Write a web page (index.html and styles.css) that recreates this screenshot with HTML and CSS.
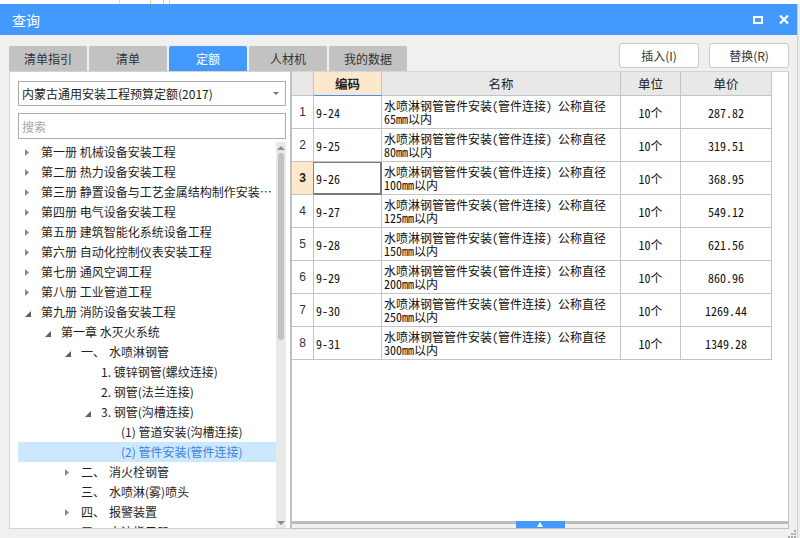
FILE: index.html
```html
<!DOCTYPE html>
<html lang="zh-CN">
<head>
<meta charset="utf-8">
<title>查询</title>
<link rel="stylesheet" href="styles.css">
</head>
<body>
<div class="underlay"><span class="ul-a"></span><span class="ul-b"></span><span class="ul-c"></span><span class="ul-d"></span></div>
<div class="shell">
  <div class="window">
    <div class="titlebar">
      <span class="title">查询</span>
      <div class="ctrls">
        <svg class="ic-max" width="10" height="8" viewBox="0 0 10 8"><rect x="1" y="1" width="8" height="6" fill="none" stroke="#fff" stroke-width="2"/></svg>
        <svg class="ic-close" width="10" height="9" viewBox="0 0 10 9"><path d="M1 0.5 L9 8.5 M9 0.5 L1 8.5" stroke="#fff" stroke-width="2.2" fill="none"/></svg>
      </div>
    </div>
    <div class="content">
      <div class="toprow">
        <div class="tabs">
          <div class="tab">清单指引</div>
          <div class="tab">清单</div>
          <div class="tab active">定额</div>
          <div class="tab">人材机</div>
          <div class="tab">我的数据</div>
        </div>
        <div class="btns">
          <button class="btn">插入(I)</button>
          <button class="btn">替换(R)</button>
        </div>
      </div>
      <div class="panels">
        <div class="left">
          <div class="select"><span>内蒙古通用安装工程预算定额(2017)</span><svg class="caret" width="6" height="3" viewBox="0 0 6 3"><polygon points="0,0 6,0 3,3" fill="#777"/></svg></div>
          <div class="search">搜索</div>
          <div class="tree">
            <div class="tree-list">
              <div class="node l0"><span class="tg"><svg width="4" height="7" viewBox="0 0 4 7"><polygon points="0,0 4,3.5 0,7" fill="#8a8a8a"/></svg></span><span class="label">第一册 机械设备安装工程</span></div>
              <div class="node l0"><span class="tg"><svg width="4" height="7" viewBox="0 0 4 7"><polygon points="0,0 4,3.5 0,7" fill="#8a8a8a"/></svg></span><span class="label">第二册 热力设备安装工程</span></div>
              <div class="node l0"><span class="tg"><svg width="4" height="7" viewBox="0 0 4 7"><polygon points="0,0 4,3.5 0,7" fill="#8a8a8a"/></svg></span><span class="label">第三册 静置设备与工艺金属结构制作安装工程</span></div>
              <div class="node l0"><span class="tg"><svg width="4" height="7" viewBox="0 0 4 7"><polygon points="0,0 4,3.5 0,7" fill="#8a8a8a"/></svg></span><span class="label">第四册 电气设备安装工程</span></div>
              <div class="node l0"><span class="tg"><svg width="4" height="7" viewBox="0 0 4 7"><polygon points="0,0 4,3.5 0,7" fill="#8a8a8a"/></svg></span><span class="label">第五册 建筑智能化系统设备工程</span></div>
              <div class="node l0"><span class="tg"><svg width="4" height="7" viewBox="0 0 4 7"><polygon points="0,0 4,3.5 0,7" fill="#8a8a8a"/></svg></span><span class="label">第六册 自动化控制仪表安装工程</span></div>
              <div class="node l0"><span class="tg"><svg width="4" height="7" viewBox="0 0 4 7"><polygon points="0,0 4,3.5 0,7" fill="#8a8a8a"/></svg></span><span class="label">第七册 通风空调工程</span></div>
              <div class="node l0"><span class="tg"><svg width="4" height="7" viewBox="0 0 4 7"><polygon points="0,0 4,3.5 0,7" fill="#8a8a8a"/></svg></span><span class="label">第八册 工业管道工程</span></div>
              <div class="node l0"><span class="tg"><svg class="exp" width="6" height="6" viewBox="0 0 6 6"><polygon points="6,0 6,6 0,6" fill="#5e5e5e"/></svg></span><span class="label">第九册 消防设备安装工程</span></div>
              <div class="node l1"><span class="tg"><svg class="exp" width="6" height="6" viewBox="0 0 6 6"><polygon points="6,0 6,6 0,6" fill="#5e5e5e"/></svg></span><span class="label">第一章 水灭火系统</span></div>
              <div class="node l2"><span class="tg"><svg class="exp" width="6" height="6" viewBox="0 0 6 6"><polygon points="6,0 6,6 0,6" fill="#5e5e5e"/></svg></span><span class="label"><span class="ord">一、</span>水喷淋钢管</span></div>
              <div class="node l3"><span class="tg"></span><span class="label">1. 镀锌钢管(螺纹连接)</span></div>
              <div class="node l3"><span class="tg"></span><span class="label">2. 钢管(法兰连接)</span></div>
              <div class="node l3"><span class="tg"><svg class="exp" width="6" height="6" viewBox="0 0 6 6"><polygon points="6,0 6,6 0,6" fill="#5e5e5e"/></svg></span><span class="label">3. 钢管(沟槽连接)</span></div>
              <div class="node l4"><span class="tg"></span><span class="label">(1) 管道安装(沟槽连接)</span></div>
              <div class="node l4 selected"><span class="tg"></span><span class="label">(2) 管件安装(管件连接)</span></div>
              <div class="node l2"><span class="tg"><svg width="4" height="7" viewBox="0 0 4 7"><polygon points="0,0 4,3.5 0,7" fill="#8a8a8a"/></svg></span><span class="label"><span class="ord">二、</span>消火栓钢管</span></div>
              <div class="node l2"><span class="tg"></span><span class="label"><span class="ord">三、</span>水喷淋(雾)喷头</span></div>
              <div class="node l2"><span class="tg"><svg width="4" height="7" viewBox="0 0 4 7"><polygon points="0,0 4,3.5 0,7" fill="#8a8a8a"/></svg></span><span class="label"><span class="ord">四、</span>报警装置</span></div>
              <div class="node l2"><span class="tg"></span><span class="label"><span class="ord">五、</span>水流指示器</span></div>
            </div>
            <div class="vscroll">
              <svg class="arr-up" width="8" height="4" viewBox="0 0 8 4"><polygon points="0,4 4,0 8,4" fill="#8c8c8c"/></svg>
              <span class="thumb"></span>
              <span class="vspace"></span>
              <svg class="arr-down" width="8" height="4" viewBox="0 0 8 4"><polygon points="0,0 8,0 4,4" fill="#8c8c8c"/></svg>
            </div>
          </div>
        </div>
        <div class="right">
          <div class="table-area">
            <div class="grid">
              <div class="h"></div>
              <div class="h code-h">编码</div>
              <div class="h">名称</div>
              <div class="h">单位</div>
              <div class="h">单价</div>

              <div class="c num">1</div><div class="c code">9-24</div><div class="c name">水喷淋钢管管件安装(管件连接) 公称直径<br>65mm以内</div><div class="c unit">10个</div><div class="c price">287.82</div>
              <div class="c num">2</div><div class="c code">9-25</div><div class="c name">水喷淋钢管管件安装(管件连接) 公称直径<br>80mm以内</div><div class="c unit">10个</div><div class="c price">319.51</div>
              <div class="c num cur">3</div><div class="c code sel">9-26</div><div class="c name">水喷淋钢管管件安装(管件连接) 公称直径<br>100mm以内</div><div class="c unit">10个</div><div class="c price">368.95</div>
              <div class="c num">4</div><div class="c code">9-27</div><div class="c name">水喷淋钢管管件安装(管件连接) 公称直径<br>125mm以内</div><div class="c unit">10个</div><div class="c price">549.12</div>
              <div class="c num">5</div><div class="c code">9-28</div><div class="c name">水喷淋钢管管件安装(管件连接) 公称直径<br>150mm以内</div><div class="c unit">10个</div><div class="c price">621.56</div>
              <div class="c num">6</div><div class="c code">9-29</div><div class="c name">水喷淋钢管管件安装(管件连接) 公称直径<br>200mm以内</div><div class="c unit">10个</div><div class="c price">860.96</div>
              <div class="c num">7</div><div class="c code">9-30</div><div class="c name">水喷淋钢管管件安装(管件连接) 公称直径<br>250mm以内</div><div class="c unit">10个</div><div class="c price">1269.44</div>
              <div class="c num">8</div><div class="c code">9-31</div><div class="c name">水喷淋钢管管件安装(管件连接) 公称直径<br>300mm以内</div><div class="c unit">10个</div><div class="c price">1349.28</div>
            </div>
          </div>
          <div class="splitter"><div class="handle"><svg width="6" height="5" viewBox="0 0 6 5"><polygon points="0,5 3,0 6,5" fill="#fff"/></svg></div></div>
        </div>
      </div>
    </div>
    <svg class="grip" width="9" height="8" viewBox="0 0 9 8">
      <rect x="7" y="0" width="2" height="2" fill="#a8a8a8"/>
      <rect x="4" y="3" width="2" height="2" fill="#a8a8a8"/>
      <rect x="7" y="3" width="2" height="2" fill="#a8a8a8"/>
      <rect x="1" y="6" width="2" height="2" fill="#a8a8a8"/>
      <rect x="4" y="6" width="2" height="2" fill="#a8a8a8"/>
      <rect x="7" y="6" width="2" height="2" fill="#a8a8a8"/>
    </svg>
  </div>
  <div class="outside"></div>
</div>
</body>
</html>
```

FILE: styles.css
```css
* { box-sizing: border-box; }
html, body { margin: 0; padding: 0; }
body {
  width: 800px;
  height: 538px;
  overflow: hidden;
  background: #fff;
  font-family: "Noto Sans CJK SC", "Microsoft YaHei", sans-serif;
  font-size: 12px;
  color: #222;
  display: flex;
  flex-direction: column;
}
svg { display: block; }

/* underlying application strip */
.underlay { height: 4px; flex: none; background: #fff; display: flex; }
.ul-a { width: 120px; border-right: 1px solid #d8d8d8; }
.ul-b { width: 30px; }
.ul-c { width: 14px; border-left: 1px solid #f3c98f; border-right: 1px solid #f3c98f; }
.ul-d { width: 6px; border-right: 1px solid #cfcfcf; }

.shell { flex: 1; display: flex; min-height: 0; }
.window {
  width: 798px;
  border-right: 1px solid #cfcfcf;
  background: #f0f0f0;
  display: flex;
  flex-direction: column;
  position: relative;
}
.outside { flex: 1; background: #ececec; }

.titlebar {
  height: 31px;
  flex: none;
  background: #4499ff;
  color: #fff;
  display: flex;
  align-items: center;
  justify-content: space-between;
  padding: 0 8px 0 12px;
}
.title { font-size: 14px; }
.ctrls { display: flex; align-items: center; gap: 16px; }

.content {
  flex: 1;
  min-height: 0;
  display: flex;
  flex-direction: column;
  padding: 0 8px 9px 9px;
}
.toprow { height: 36px; flex: none; display: flex; justify-content: space-between; }
.tabs { align-self: flex-end; display: flex; gap: 2px; }
.tab {
  width: 78px;
  height: 25px;
  background: #c2c2c2;
  color: #333;
  display: flex;
  align-items: center;
  justify-content: center;
  border-radius: 2px 2px 0 0;
}
.tab.active { background: #4499ff; color: #fff; }
.btns { display: flex; gap: 10px; padding-top: 8px; }
.btn {
  width: 80px;
  height: 25px;
  padding: 0;
  background: #fff;
  border: 1px solid #c9c9c9;
  border-radius: 3px;
  font: inherit;
  color: #333;
  display: flex;
  align-items: center;
  justify-content: center;
}

.panels { flex: 1; min-height: 0; display: flex; }

/* left panel */
.left {
  width: 282px;
  flex: none;
  background: #fff;
  border: 1px solid #d3d3d3;
  border-right-color: #bdbdbd;
  display: flex;
  flex-direction: column;
  padding: 9px 4px 0 8px;
}
.select {
  height: 25px;
  flex: none;
  border: 1px solid #ababab;
  display: flex;
  align-items: center;
  justify-content: space-between;
  padding: 0 6px 0 3px;
  color: #222;
}
.search {
  margin-top: 7px;
  height: 26px;
  flex: none;
  border: 1px solid #ababab;
  padding-left: 3px;
  display: flex;
  align-items: center;
  color: #a6a6a6;
}
.tree { margin-top: 3px; flex: 1; min-height: 0; display: flex; overflow: hidden; }
.tree-list { flex: 1; min-width: 0; overflow: hidden; }
.node {
  height: 20px;
  line-height: 20px;
  display: flex;
  align-items: center;
  white-space: nowrap;
  color: #1e1e1e;
}
.l0 { padding-left: 7px; }
.l1 { padding-left: 27px; }
.l2 { padding-left: 47px; }
.l3 { padding-left: 67px; }
.l4 { padding-left: 87px; }
.node.selected { background: #cce8ff; color: #3f80e0; }
.tg { width: 16px; height: 20px; flex: none; display: flex; align-items: center; }
.tg .exp { margin-top: 3px; }
.label { flex: 1; min-width: 0; overflow: hidden; text-overflow: ellipsis; padding-right: 2px; }
.ord { margin-right: 4px; }

.vscroll {
  width: 10px;
  flex: none;
  background: #e9e9e9;
  display: flex;
  flex-direction: column;
  align-items: center;
}
.arr-up { margin-top: 4px; }
.thumb { margin-top: 3px; width: 6px; height: 187px; background: #c1c1c1; border-radius: 3px; }
.vspace { flex: 1; }
.arr-down { margin-bottom: 3px; }

/* right panel */
.right {
  flex: 1;
  min-width: 0;
  background: #fff;
  border: 1px solid #c2c2c2;
  border-top-color: #d6d6d6;
  display: flex;
  flex-direction: column;
}
.table-area { flex: 1; min-height: 0; overflow: hidden; }
.grid {
  display: grid;
  grid-template-columns: 22px 68px 239px 60px 91px;
  width: 480px;
}
.h {
  height: 24px;
  background: #e8e8e8;
  border-right: 1px solid #c4c4c4;
  border-bottom: 1px solid #c4c4c4;
  display: flex;
  align-items: center;
  justify-content: center;
  color: #222;
  font-size: 12.5px;
}
.h.code-h { background: #fde8cc; font-weight: 700; border-bottom-color: #3d8eff; }
.c {
  height: 33px;
  border-right: 1px solid #c4c4c4;
  border-bottom: 1px solid #c4c4c4;
  display: flex;
  align-items: center;
  font-family: "Noto Sans Mono CJK SC", "Noto Sans CJK SC", monospace;
  font-size: 12px;
  color: #111;
}
.num { justify-content: center; font-family: "Liberation Sans", sans-serif; color: #333; }
.num.cur { background: #fde8cc; font-weight: 700; border-right-color: #3d8eff; color: #222; }
.code { padding-left: 2px; }
.code.sel {
  border-right-color: #7a7a7a;
  border-bottom-color: #7a7a7a;
  box-shadow: inset 0 1px 0 #7a7a7a, inset -1px 0 0 #7a7a7a, inset 0 -1px 0 #7a7a7a;
}
.name { padding-left: 2px; line-height: 13px; white-space: nowrap; }
.unit, .price { justify-content: center; }

.splitter {
  height: 7px;
  flex: none;
  background: linear-gradient(#bdbdbd 0 3px, #f0f0f0 3px);
  display: flex;
  justify-content: center;
}
.handle {
  width: 49px;
  height: 7px;
  background: #4499ff;
  display: flex;
  justify-content: center;
  align-items: center;
}

.grip { position: absolute; right: 1px; bottom: 0; }
```
